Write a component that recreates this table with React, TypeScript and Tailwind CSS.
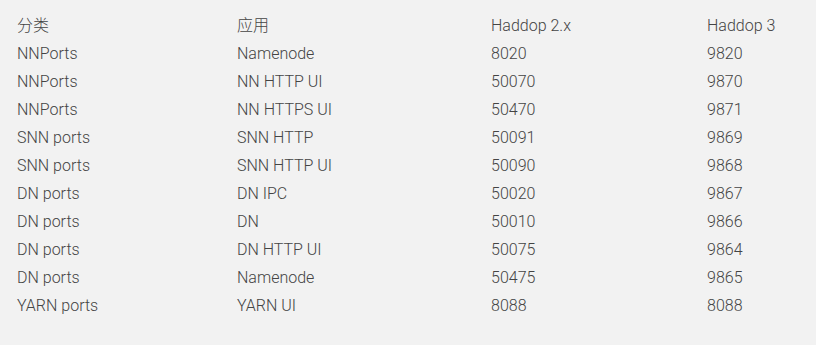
import React from "react";

const rows: string[][] = [
  ["分类", "应用", "Haddop 2.x", "Haddop 3"],
  ["NNPorts", "Namenode", "8020", "9820"],
  ["NNPorts", "NN HTTP UI", "50070", "9870"],
  ["NNPorts", "NN HTTPS UI", "50470", "9871"],
  ["SNN ports", "SNN HTTP", "50091", "9869"],
  ["SNN ports", "SNN HTTP UI", "50090", "9868"],
  ["DN ports", "DN IPC", "50020", "9867"],
  ["DN ports", "DN", "50010", "9866"],
  ["DN ports", "DN HTTP UI", "50075", "9864"],
  ["DN ports", "Namenode", "50475", "9865"],
  ["YARN ports", "YARN UI", "8088", "8088"],
];

export default function App() {
  return (
    <div
      className="w-[816px] h-[345px] bg-[#f2f2f2] text-[#444] pt-[12px] pl-[17px] font-light text-[16px]"
      style={{ fontFamily: 'Roboto, "Noto Sans CJK SC", sans-serif' }}
    >
      {rows.map((r, i) => (
        <div key={i} className="grid grid-cols-[220px_254px_216px_1fr] h-[28px] items-center leading-[28px]">
          {r.map((c, j) => (
            <div key={j}>{c}</div>
          ))}
        </div>
      ))}
    </div>
  );
}
